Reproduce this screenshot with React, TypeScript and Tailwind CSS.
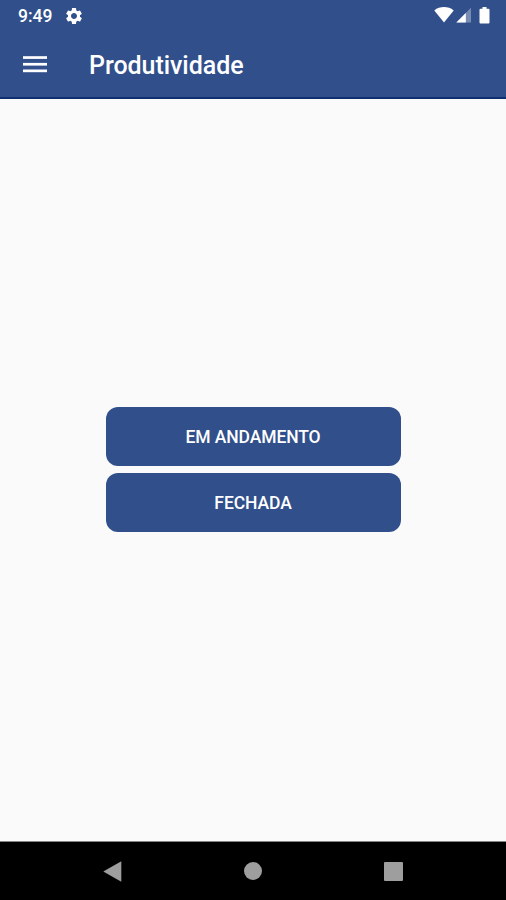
import { MdSettings } from "react-icons/md";

function StatusBar() {
  return (
    <div className="flex h-8 items-center pl-[18px] pr-4 text-white">
      <span className="w-[46px] whitespace-nowrap pt-[2px] text-[17.5px] font-medium leading-none">9:49</span>
      <MdSettings className="mb-[1px] size-[20px]" />
      <div className="mb-[2px] ml-auto flex items-center">
        <svg className="h-[16px] w-[20px]" viewBox="0 0 20 16" fill="currentColor">
          <path d="M0.3 3.4C6-1 14-1 19.7 3.4L10 15.6Z" />
        </svg>
        <svg className="ml-[2px] h-[16px] w-[15px]" viewBox="0 0 15 16">
          <path d="M15 0.8V15.6H0.3Z" fill="#fff" fillOpacity="0.35" />
          <path d="M9.8 6V15.6H0.3Z" fill="#fff" />
        </svg>
        <svg className="ml-[8px] h-[17px] w-[11px]" viewBox="0 0 11 17" fill="currentColor">
          <path d="M3.5 0H7.5V1.8H9.5Q10.5 1.8 10.5 2.8V15.6Q10.5 16.6 9.5 16.6H1.5Q0.5 16.6 0.5 15.6V2.8Q0.5 1.8 1.5 1.8H3.5Z" />
        </svg>
      </div>
    </div>
  );
}

function AppBar() {
  return (
    <div className="flex grow items-center pl-[23px]">
      <button aria-label="Menu" className="mb-[1px] w-[66px]">
        <svg className="block h-[17px] w-[24px]" viewBox="0 0 24 17" fill="#fff">
          <rect y="0.2" width="24" height="2.7" />
          <rect y="6.9" width="24" height="2.7" />
          <rect y="13.5" width="24" height="2.7" />
        </svg>
      </button>
      <h1 className="pt-[1px] text-[25px] font-medium leading-none tracking-[-0.05px] text-white">Produtividade</h1>
    </div>
  );
}

function ActionButton({ label }: { label: string }) {
  return (
    <button className="h-[59px] w-[295px] rounded-[12px] bg-[#314f8b] pt-[2px] text-[17.5px] font-medium tracking-[-0.1px] text-white">
      {label}
    </button>
  );
}

export default function App() {
  return (
    <div className="flex h-[900px] w-[506px] flex-col bg-[#fafafa] font-['Roboto',sans-serif]">
      <header className="flex h-[99px] flex-col border-b-2 border-[#0f2f73] bg-[#314f8b]">
        <StatusBar />
        <AppBar />
      </header>
      <main className="flex grow flex-col items-center gap-[7px] pt-[308px]">
        <ActionButton label="EM ANDAMENTO" />
        <ActionButton label="FECHADA" />
      </main>
      <nav className="flex h-[59px] items-center border-t border-[#858585] bg-black pl-[103px]">
        <svg className="h-[21px] w-[19px]" viewBox="0 0 19 21" fill="#9e9e9e">
          <path d="M0.3 10.5L18.3 0.3V20.7Z" />
        </svg>
        <span className="ml-[122px] size-[18px] rounded-full bg-[#9e9e9e]" />
        <span className="ml-[122px] size-[19px] rounded-[1px] bg-[#9e9e9e]" />
      </nav>
    </div>
  );
}
